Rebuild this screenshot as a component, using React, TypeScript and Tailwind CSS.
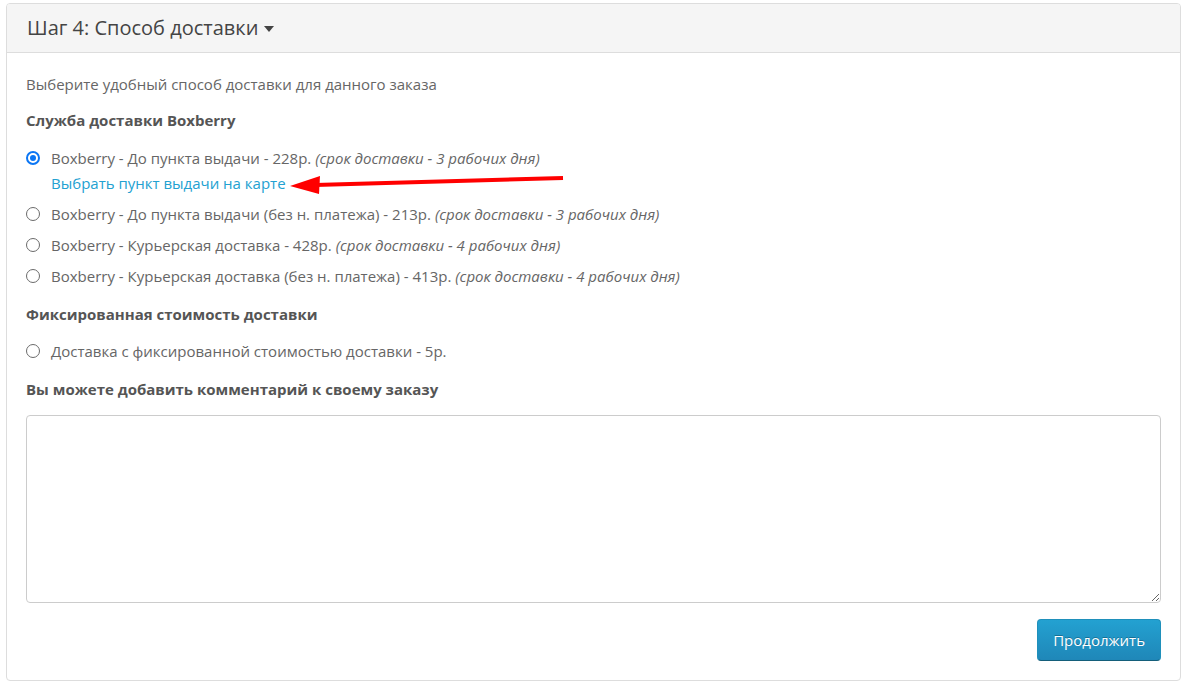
const font = { fontFamily: '"Open Sans", "Noto Sans", sans-serif' };

interface Option {
  label: string;
  term?: string;
  checked?: boolean;
}

const boxberry: Option[] = [
  { label: "Boxberry - До пункта выдачи - 228р.", term: "(срок доставки - 3 рабочих дня)", checked: true },
  { label: "Boxberry - До пункта выдачи (без н. платежа) - 213р.", term: "(срок доставки - 3 рабочих дня)" },
  { label: "Boxberry - Курьерская доставка - 428р.", term: "(срок доставки - 4 рабочих дня)" },
  { label: "Boxberry - Курьерская доставка (без н. платежа) - 413р.", term: "(срок доставки - 4 рабочих дня)" },
];

function Radio({ checked }: { checked?: boolean }) {
  if (checked) {
    return (
      <span className="w-[14px] h-[14px] rounded-full border-2 border-[#0b76f4] flex items-center justify-center shrink-0">
        <span className="w-[6px] h-[6px] rounded-full bg-[#0b76f4]" />
      </span>
    );
  }
  return <span className="w-[14px] h-[14px] rounded-full border-[1.5px] border-[#6b6b6b] bg-white shrink-0" />;
}

function RadioRow({ option }: { option: Option }) {
  return (
    <label className="flex items-center h-5">
      <Radio checked={option.checked} />
      <span className="ml-[11px] whitespace-nowrap">
        {option.label}
        {option.term && <em className="ml-1">{option.term}</em>}
      </span>
    </label>
  );
}

export default function App() {
  return (
    <div className="relative w-[1185px] h-[687px] bg-white pt-[3px] pl-[6px] text-[15px] leading-5 text-[#666]" style={font}>
      <div className="w-[1175px] border border-[#ddd] rounded-[4px] overflow-hidden">
        <div className="h-[49px] bg-[#f5f5f5] border-b border-[#ddd] px-[20px] flex items-center">
          <h4 className="text-[20px] text-[#444] flex items-center">
            Шаг 4: Способ доставки
            <svg width="10" height="6" viewBox="0 0 10 6" className="ml-[6px] mt-[2px]">
              <path d="M0 0 L10 0 L5 6 Z" fill="#444" />
            </svg>
          </h4>
        </div>

        <div className="px-[19px] pt-[21px] pb-[19px]">
          <p>Выберите удобный способ доставки для данного заказа</p>

          <p className="mt-[16px] font-bold text-[#555]">Служба доставки Boxberry</p>

          <div className="mt-[18px]">
            <RadioRow option={boxberry[0]} />
            <a className="block mt-[5px] pl-[25px] text-[#23a1d1]">Выбрать пункт выдачи на карте</a>
            {boxberry.slice(1).map((o) => (
              <div key={o.label} className="mt-[11px]">
                <RadioRow option={o} />
              </div>
            ))}
          </div>

          <p className="mt-[18px] font-bold text-[#555]">Фиксированная стоимость доставки</p>

          <div className="mt-[17px]">
            <RadioRow option={{ label: "Доставка с фиксированной стоимостью доставки - 5р." }} />
          </div>

          <p className="mt-[18px] font-bold text-[#555]">Вы можете добавить комментарий к своему заказу</p>

          <textarea className="block mt-[16px] w-full h-[188px] border border-[#ccc] rounded-[4px] resize-y outline-none" />

          <div className="flex justify-end mt-[16px]">
            <button className="h-[42px] px-[15px] rounded-[4px] border border-[#1f90bb] border-b-[#145e7a] bg-gradient-to-b from-[#23a1d1] to-[#1f87b8] text-white text-[15px] [text-shadow:0_-1px_0_rgba(0,0,0,0.25)]">
              Продолжить
            </button>
          </div>
        </div>
      </div>

      <svg className="absolute left-[285px] top-[170px]" width="285" height="30" viewBox="0 0 285 30">
        <line x1="30" y1="15" x2="278" y2="8" stroke="#f00" strokeWidth="4" />
        <path d="M5 16 L35 6 L34 24 Z" fill="#f00" />
      </svg>
    </div>
  );
}
